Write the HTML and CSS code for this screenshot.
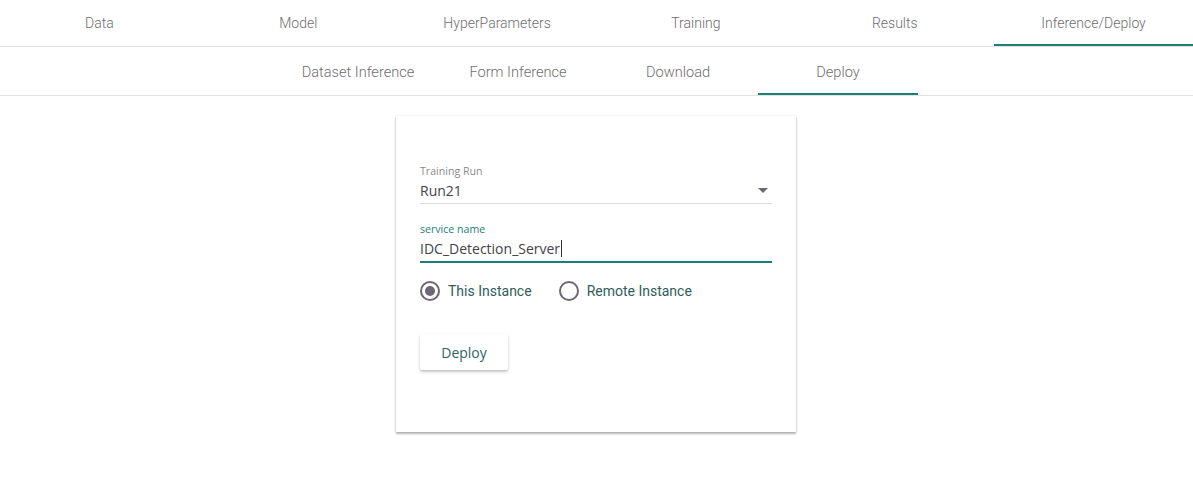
FILE: index.html
```html
<!DOCTYPE html>
<html>
<head>
<meta charset="utf-8">
<link rel="stylesheet" href="styles.css">
</head>
<body>
<nav class="tabs">
  <div class="tab">Data</div>
  <div class="tab">Model</div>
  <div class="tab">HyperParameters</div>
  <div class="tab">Training</div>
  <div class="tab">Results</div>
  <div class="tab active">Inference/Deploy</div>
</nav>
<nav class="subtabs">
  <div class="subtab">Dataset Inference</div>
  <div class="subtab">Form Inference</div>
  <div class="subtab">Download</div>
  <div class="subtab active">Deploy</div>
</nav>
<main class="content">
  <section class="card">
    <div class="field">
      <div class="label">Training Run</div>
      <div class="select">
        <span class="value">Run21</span>
        <span class="arrow"></span>
      </div>
    </div>
    <div class="field focused">
      <div class="label">service name</div>
      <div class="input"><span class="value">IDC_Detection_Server</span><span class="caret"></span></div>
    </div>
    <div class="radios">
      <label class="radio checked"><span class="circle"><span class="dot"></span></span>This Instance</label>
      <label class="radio"><span class="circle"></span>Remote Instance</label>
    </div>
    <button class="btn">Deploy</button>
  </section>
</main>
</body>
</html>
```
FILE: styles.css
```css
* { box-sizing: border-box; }
html, body { margin: 0; padding: 0; background: #fff; }
body { font-family: Roboto, "Liberation Sans", Arial, sans-serif; min-height: 479px; }

.tabs {
  display: grid;
  grid-template-columns: repeat(6, 1fr);
  height: 47px;
  border-bottom: 1px solid #e3e3e3;
}
.tab {
  display: flex;
  align-items: center;
  justify-content: center;
  font-size: 14px;
  font-weight: 300;
  color: #6e6e6e;
  padding-top: 2px;
  border-bottom: 2px solid transparent;
}
.tab.active { border-bottom-color: #1b7f77; }

.subtabs {
  display: flex;
  justify-content: center;
  height: 49px;
  border-bottom: 1px solid #e3e3e3;
  padding-left: 3px;
}
.subtab {
  width: 160px;
  display: flex;
  align-items: center;
  justify-content: center;
  font-size: 14.6px;
  font-weight: 300;
  color: #6e6e6e;
  border-bottom: 2px solid transparent;
  padding-top: 3px;
}
.subtab.active { border-bottom-color: #1b7f77; }

.content {
  display: flex;
  justify-content: center;
  padding: 20px 1px 40px 0;
}
.card {
  width: 400px;
  height: 316px;
  background: #fff;
  box-shadow: 0 2px 2px rgba(0,0,0,0.28), 0 0 2px rgba(0,0,0,0.12);
  padding: 48px 24px 0 24px;
  font-family: "Open Sans", sans-serif;
}
.field { margin-bottom: 18px; }
.field.focused { margin-bottom: 16px; }
.label {
  font-size: 10.6px;
  color: #8a8a8a;
  line-height: 14px;
}
.field.focused .label { color: #1b7f77; }
.select, .input {
  display: flex;
  align-items: center;
  height: 26px;
  border-bottom: 1px solid #dcdcdc;
  font-size: 14px;
  color: #444;
}
.select { justify-content: space-between; }
.arrow {
  width: 0; height: 0;
  border-left: 5px solid transparent;
  border-right: 5px solid transparent;
  border-top: 5px solid #6d6673;
  margin-right: 4px;
}
.input { border-bottom: 2px solid #1b7f77; height: 27px; }
.caret {
  display: inline-block;
  width: 1px;
  height: 17px;
  background: #333;
  margin-left: 1px;
}
.radios {
  display: flex;
  gap: 27px;
  height: 24px;
  align-items: center;
}
.radio {
  display: flex;
  align-items: center;
  font-family: Roboto, "Liberation Sans", sans-serif;
  font-size: 14px;
  color: #2f5d5a;
}
.circle {
  width: 20px; height: 20px;
  border: 2px solid #6d6673;
  border-radius: 50%;
  display: flex;
  align-items: center;
  justify-content: center;
  margin-right: 8px;
}
.dot { width: 10px; height: 10px; border-radius: 50%; background: #6d6673; }
.btn {
  margin-top: 31px;
  width: 88px;
  height: 36px;
  border: none;
  background: #fff;
  border-radius: 2px;
  box-shadow: 0 2px 3px rgba(0,0,0,0.22), 0 0 1px rgba(0,0,0,0.12);
  font-family: "Open Sans", sans-serif;
  font-size: 14px;
  color: #2f6461;
  display: block;
}
```
